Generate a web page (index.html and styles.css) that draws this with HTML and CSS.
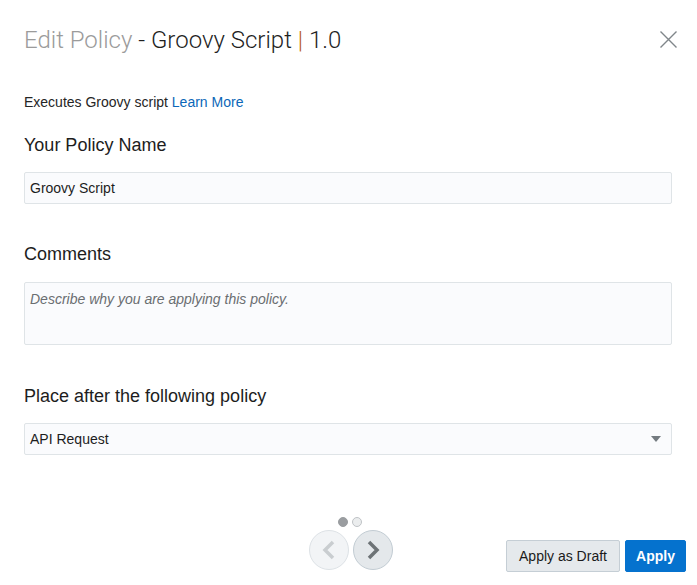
FILE: index.html
```html
<!DOCTYPE html>
<html>
<head>
<meta charset="utf-8">
<link rel="stylesheet" href="styles.css">
</head>
<body>
<div class="dialog">
  <div class="header">
    <h1 class="title"><span class="muted">Edit Policy</span> - Groovy Script <span class="bar">|</span> 1.0</h1>
    <button class="close" aria-label="Close">
      <svg width="17" height="17" viewBox="0 0 17 17"><path d="M0.5 0.5 L16.5 16.5 M16.5 0.5 L0.5 16.5" stroke="#80868a" stroke-width="1.4" fill="none"/></svg>
    </button>
  </div>
  <p class="desc">Executes Groovy script <a href="#" class="link">Learn More</a></p>

  <label class="label label-first">Your Policy Name</label>
  <div class="field">Groovy Script</div>

  <label class="label label-comments">Comments</label>
  <div class="field area"><span class="placeholder">Describe why you are applying this policy.</span></div>

  <label class="label label-place">Place after the following policy</label>
  <div class="field select">
    <span>API Request</span>
    <svg width="10" height="6" viewBox="0 0 10 6"><path d="M0 0 H10 L5 6 Z" fill="#747b80"/></svg>
  </div>

  <div class="footer">
    <div class="spacer"></div>
    <div class="pager">
      <div class="dots"><span class="dot on"></span><span class="dot"></span></div>
      <div class="arrows">
        <button class="circle prev"><svg width="16" height="20" viewBox="0 0 16 20"><path d="M12 2 L4 10 L12 18" stroke="#c9cdd0" stroke-width="3.5" fill="none"/></svg></button>
        <button class="circle next"><svg width="16" height="20" viewBox="0 0 16 20"><path d="M4 2 L12 10 L4 18" stroke="#6d7376" stroke-width="3.5" fill="none"/></svg></button>
      </div>
    </div>
    <div class="actions">
      <button class="btn draft">Apply as Draft</button>
      <button class="btn primary">Apply</button>
    </div>
  </div>
</div>
</body>
</html>
```
FILE: styles.css
```css
* { box-sizing: border-box; }
html, body { margin: 0; padding: 0; background: #fff; }
body { font-family: "Liberation Sans", Arial, sans-serif; color: #252525; }
.dialog { width: 697px; height: 585px; padding: 0 25px 0 24px; display: flex; flex-direction: column; }
.header { display: flex; align-items: center; justify-content: space-between; height: 82px; }
.title { margin: 0; font-family: Roboto, "Liberation Sans", sans-serif; font-weight: 300; font-size: 24px; color: #1f1f1f; }
.muted { color: #9b9b9b; }
.bar { color: #b8601f; }
.close { border: 0; background: none; padding: 0; margin-right: -5px; margin-top: -2px; display: flex; cursor: pointer; }
.desc { margin: 13px 0 0; font-size: 14px; line-height: 16px; }
.link { color: #0b67b8; text-decoration: none; }
.label { display: block; font-size: 18px; line-height: 20px; color: #1d1d1d; }
.label-first { margin-top: 25px; }
.label-comments { margin-top: 40px; }
.label-place { margin-top: 41px; }
.field { margin-top: 17px; height: 32px; border: 1px solid #dfe4e7; border-radius: 2px; background: #fafbfd; font-size: 14px; padding: 0 5px; display: flex; align-items: center; color: #1d1d1d; }
.area { height: 64px; align-items: flex-start; padding-top: 8px; margin-top: 18px; }
.placeholder { font-style: italic; color: #6a6e71; }
.select { justify-content: space-between; padding-right: 10px; }
.footer { margin-top: auto; margin-right: -14px; height: 132px; display: grid; grid-template-columns: 1fr auto 1fr; align-items: end; padding-bottom: 13px; }
.pager { display: flex; flex-direction: column; align-items: center; padding-bottom: 2px; margin-right: 9px; }
.dots { display: flex; gap: 4px; margin-bottom: 3px; margin-left: -2px; }
.dot { width: 10px; height: 10px; border-radius: 50%; background: #ebedee; border: 1px solid #bfc3c6; }
.dot.on { background: #9a9da0; border-color: #9a9da0; }
.arrows { display: flex; gap: 4px; }
.circle { width: 40px; height: 40px; border-radius: 50%; padding: 0; display: flex; align-items: center; justify-content: center; cursor: pointer; }
.prev { background: #f2f4f6; border: 1px solid #dde2e6; }
.next { background: #e4e8eb; border: 1px solid #c2ccd3; }
.actions { display: flex; justify-content: flex-end; gap: 5px; }
.btn { height: 32px; border-radius: 2px; font-family: "Liberation Sans", Arial, sans-serif; font-size: 14px; padding: 0 10px; cursor: pointer; }
.draft { background: #e5e9ec; border: 1px solid #c5ced5; color: #1a1a1a; width: 114px; }
.primary { background: #0572ce; border: 1px solid #0572ce; color: #fff; font-weight: bold; width: 61px; }
```
